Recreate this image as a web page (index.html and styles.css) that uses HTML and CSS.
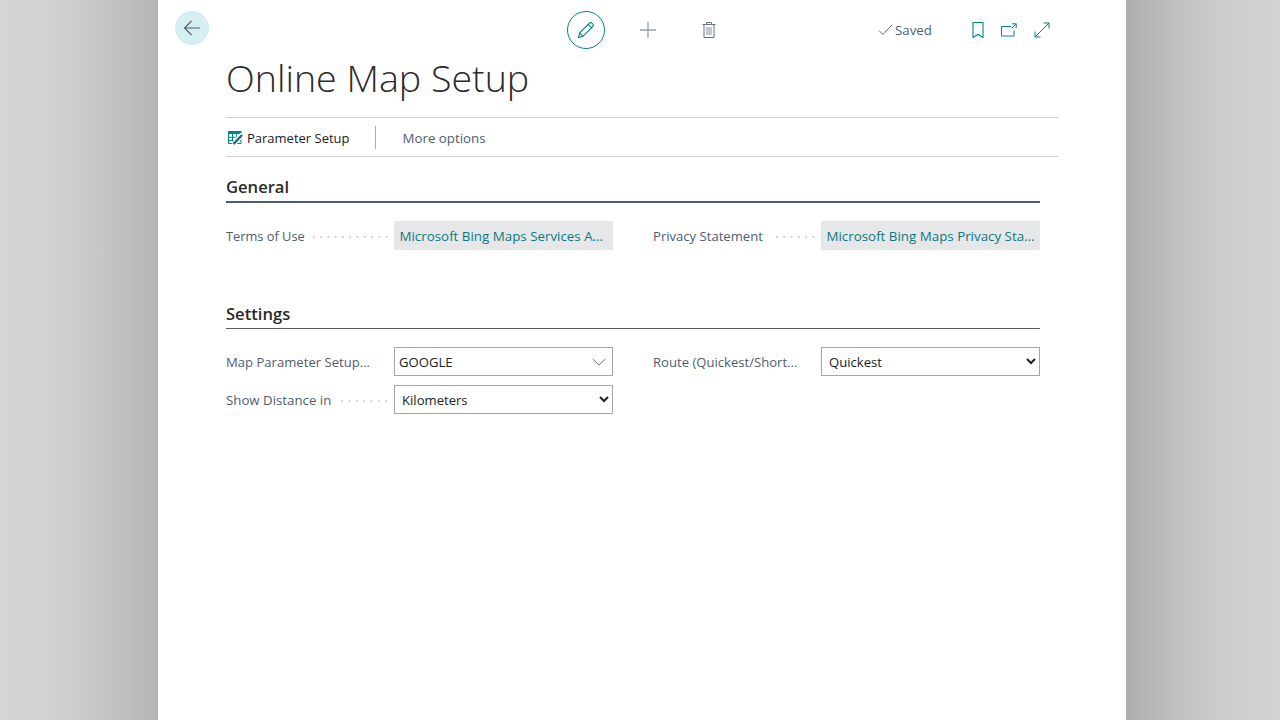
FILE: index.html
```html
<!DOCTYPE html>
<html lang="en">
<head>
<meta charset="utf-8">
<title>Online Map Setup</title>
<link rel="stylesheet" href="styles.css">
</head>
<body>
<main class="panel">
  <header class="topbar">
    <button class="back" aria-label="Back">
      <svg width="18" height="16" viewBox="0 0 18 16"><path d="M17 8H1.500M8.500 1L1.500 8l7 7" fill="none" stroke="#505c6d" stroke-width="1.100"/></svg>
    </button>
    <div class="actions">
      <button class="edit" aria-label="Edit">
        <svg width="18" height="18" viewBox="0 0 18 18"><path d="M1.500 16.500l1.200-4.600L12.600 2a1.500 1.500 0 0 1 2.100 0l1.200 1.200a1.500 1.500 0 0 1 0 2.100L6 15.300l-4.500 1.200zM2.700 11.900L6 15.300M11.200 3.400l3.400 3.400" fill="none" stroke="#008489" stroke-width="1.100"/></svg>
      </button>
      <svg class="plus" width="16" height="16" viewBox="0 0 16 16"><path d="M8 0v16M0 8h16" stroke="#9a9ea6" stroke-width="1.300" fill="none"/></svg>
      <svg class="trash" width="14" height="16" viewBox="0 0 14 16"><path d="M.5 2.500h13M4.500 2.500v-2h5v2M2 2.500v13h10v-13" fill="none" stroke="#6a7280" stroke-width="1"/><path d="M5 5v8M7 5v8M9 5v8" fill="none" stroke="#6a7280" stroke-width=".8"/></svg>
    </div>
    <div class="status">
      <svg width="15" height="12" viewBox="0 0 15 12"><path d="M1 6.500l3.800 4L14 1" fill="none" stroke="#6a7280" stroke-width="1"/></svg>
      <span>Saved</span>
    </div>
    <div class="tools">
      <svg width="12" height="16" viewBox="0 0 12 16"><path d="M1 .5h10v15L6 12.500 1 15.500z" fill="none" stroke="#008489" stroke-width="1.100"/></svg>
      <svg width="16" height="14" viewBox="0 0 16 14"><path d="M10 3.500H.5v9.500H13V7.500M11 .8h4.200V5M15.200 .8L11 5" fill="none" stroke="#008489" stroke-width="1"/></svg>
      <svg width="16" height="16" viewBox="0 0 16 16"><path d="M1 15L15 1M9.500 1H15v5.500M1 9.500V15h5.500" fill="none" stroke="#008489" stroke-width="1"/></svg>
    </div>
  </header>

  <h1 class="title">Online Map Setup</h1>

  <nav class="menu">
    <a class="menu-item">
      <svg width="16" height="16" viewBox="0 0 16 16"><path d="M0 1h13.500v3H0z" fill="#008489"/><path d="M.5 4v9.500h12.500v-9.500M4.500 4v9.500M8.700 4v9.500M.5 7.300h12.500M.5 10.400h12.500" stroke="#008489" stroke-width="1" fill="none"/><path d="M5 14.500l9.500-10" stroke="#fff" stroke-width="5"/><path d="M5.500 14l8.500-9" stroke="#16707a" stroke-width="2.500"/></svg>
      <span>Parameter Setup</span>
    </a>
    <span class="menu-sep"></span>
    <a class="menu-more">More options</a>
  </nav>

  <section class="group group-first">
    <h2 class="group-title strong">General</h2>
    <div class="fields">
      <div class="field">
        <span class="label narrow">Terms of Use</span><span class="dots"></span>
        <a class="link">Microsoft Bing Maps Services A...</a>
      </div>
      <div class="field">
        <span class="label">Privacy Statement</span><span class="dots"></span>
        <a class="link">Microsoft Bing Maps Privacy Sta...</a>
      </div>
    </div>
  </section>

  <section class="group group-second">
    <h2 class="group-title">Settings</h2>
    <div class="fields">
      <div class="field">
        <span class="label cut">Map Parameter Setup...</span><span class="dots"></span>
        <div class="lookup">
          <span>GOOGLE</span>
          <svg width="14" height="8" viewBox="0 0 14 8"><path d="M.8 1l6.200 6 6.200-6" fill="none" stroke="#6a7280" stroke-width="1"/></svg>
        </div>
      </div>
      <div class="field">
        <span class="label cut">Route (Quickest/Short...</span><span class="dots"></span>
        <select class="select"><option>Quickest</option></select>
      </div>
      <div class="field">
        <span class="label wide">Show Distance in</span><span class="dots"></span>
        <select class="select"><option>Kilometers</option></select>
      </div>
    </div>
  </section>
</main>
</body>
</html>
```

FILE: styles.css
```css
* { box-sizing: border-box; }
html, body { margin: 0; height: 100%; }
body {
  background: linear-gradient(to right,
    #d4d6d5 0, #d1d3d2 50px, #c6c7c7 100px, #b4b4b4 158px,
    #b4b4b4 1126px, #aeaeae 1126px, #bfbfbf 1175px, #cdcdcd 1225px, #d2d2d2 1280px);
  overflow: hidden;
  font-family: "Open Sans", "Liberation Sans", sans-serif;
  font-size: 13.100px;
  color: #212121;
}
.panel {
  width: 968px;
  height: 720px;
  margin-left: 158px;
  background: #fff;
  padding: 0 68px;
}
.topbar {
  display: flex;
  align-items: flex-start;
  height: 54px;
  padding-top: 11px;
  margin-left: -51px;
}
button { border: 0; padding: 0; background: none; display: flex; align-items: center; justify-content: center; }
.back { width: 34px; height: 34px; border-radius: 50%; background: #d5eef1; }
.actions { display: flex; align-items: center; height: 38px; margin-left: 358px; }
.edit { width: 38px; height: 38px; border-radius: 50%; border: 1px solid #008489; }
.plus { margin-left: 35px; }
.trash { margin-left: 46px; }
.status { display: flex; align-items: center; gap: 2px; height: 38px; margin-left: 162px; color: #505c6d; font-size: 13.300px; }
.tools { display: flex; align-items: center; height: 38px; margin-left: 40px; }
.tools svg:nth-child(2) { margin-left: 17px; }
.tools svg:nth-child(3) { margin-left: 17px; }
.title {
  margin: 0;
  height: 63px;
  font-size: 37.600px;
  line-height: 47px;
  font-weight: 300;
  color: #2a2a2a;
}
.menu {
  display: flex;
  align-items: center;
  height: 40px;
  padding-top: 2px;
  border-top: 1px solid #d0d0d3;
  border-bottom: 1px solid #d0d0d3;
}
.menu-item { display: flex; align-items: center; gap: 3px; margin-left: 2px; font-size: 13px; }
.menu-sep { width: 1px; height: 23px; margin: -2px 27px 0 25px; background: #a9adb3; }
.menu-more { color: #505c6d; font-size: 13.300px; }
.group { width: 814px; }
.group-first { margin-top: 18px; }
.group-second { margin-top: 52px; }
.group-title {
  margin: 0;
  height: 27px;
  font-size: 16.600px;
  line-height: 24px;
  font-weight: 600;
  color: #2a2a2a;
  border-bottom: 1px solid #505c6d;
}
.group-title.strong { border-bottom-width: 2px; height: 28px; }
.fields {
  display: grid;
  grid-template-columns: 387px 387px;
  column-gap: 40px;
  row-gap: 9px;
  padding-top: 18px;
}
.field { display: flex; align-items: center; height: 29px; }
.label { color: #505c6d; white-space: nowrap; }
.label.cut { margin-right: 9px; }
.label.wide { font-size: 13.250px; }
.label.narrow { font-size: 12.800px; }
.dots {
  flex: 1;
  height: 2px;
  min-width: 0;
  margin: 2px 4px 0 8px;
  background: radial-gradient(circle at center, #d0d3d6 0 1px, transparent 1px) right center / 7.300px 2px repeat-x;
}
.link {
  width: 219px;
  height: 29px;
  flex: none;
  padding: 0 5.500px;
  font-size: 13.350px;
  line-height: 30px;
  background: #e6e7e8;
  color: #0b7a7f;
  white-space: nowrap;
  overflow: hidden;
}
.lookup {
  width: 219px;
  height: 29px;
  flex: none;
  display: flex;
  align-items: center;
  justify-content: space-between;
  padding: 0 6px 0 4px;
  border: 1px solid #a6a6a6;
}
.select {
  width: 219px;
  height: 29px;
  flex: none;
  padding: 0 0 0 3px;
  border: 1px solid #a6a6a6;
  border-radius: 0;
  background: #fff;
  font: inherit;
  color: #212121;
}
```
